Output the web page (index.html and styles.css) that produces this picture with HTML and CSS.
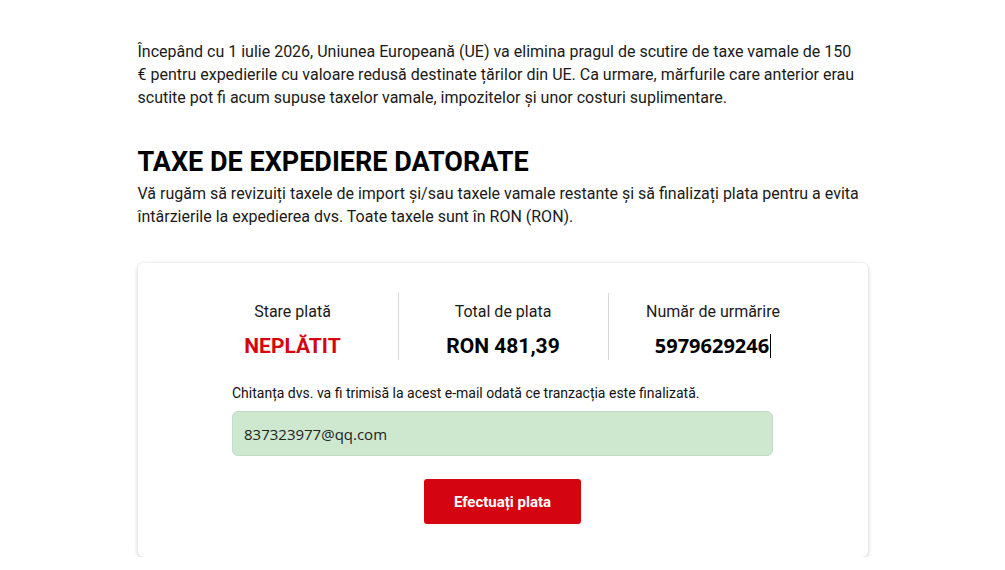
FILE: index.html
```html
<!DOCTYPE html>
<html lang="ro">
<head>
<meta charset="utf-8">
<title>Taxe de expediere</title>
<link rel="stylesheet" href="styles.css">
</head>
<body>
<main class="page">
  <p class="intro">Începând cu 1 iulie 2026, Uniunea Europeană (UE) va elimina pragul de scutire de taxe vamale de 150 € pentru expedierile cu valoare redusă destinate țărilor din UE. Ca urmare, mărfurile care anterior erau scutite pot fi acum supuse taxelor vamale, impozitelor și unor costuri suplimentare.</p>
  <h1 class="title">TAXE DE EXPEDIERE DATORATE</h1>
  <p class="lead">Vă rugăm să revizuiți taxele de import și/sau taxele vamale restante și să finalizați plata pentru a evita întârzierile la expedierea dvs. Toate taxele sunt în RON (RON).</p>
  <section class="card">
    <div class="stats">
      <div class="stat">
        <div class="stat-label">Stare plată</div>
        <div class="stat-value red">NEPLĂTIT</div>
      </div>
      <div class="stat">
        <div class="stat-label">Total de plata</div>
        <div class="stat-value">RON 481,39</div>
      </div>
      <div class="stat">
        <div class="stat-label">Număr de urmărire</div>
        <div class="stat-value track"><span>5979629246</span><span class="caret"></span></div>
      </div>
    </div>
    <div class="form">
      <label class="form-label">Chitanța dvs. va fi trimisă la acest e-mail odată ce tranzacția este finalizată.</label>
      <div class="email">837323977@qq.com</div>
      <div class="actions"><button class="pay">Efectuați plata</button></div>
    </div>
  </section>
</main>
</body>
</html>
```
FILE: styles.css
```css
* { box-sizing: border-box; }
body {
  margin: 0;
  background: #fff;
  color: #1a1a1a;
  font-family: Roboto, "Liberation Sans", sans-serif;
}
.page {
  width: 730px;
  margin: 0 auto;
  padding-top: 40px;
}
.intro {
  margin: 0;
  font-size: 16px;
  line-height: 23px;
  width: 722px;
}
.title {
  margin: 36px 0 0;
  font-size: 27px;
  line-height: 34px;
  font-weight: 700;
  color: #000;
}
.lead {
  margin: 3px 0 0;
  font-size: 16px;
  line-height: 23px;
}
.card {
  margin-top: 35px;
  border-radius: 6px;
  box-shadow: 0 1px 4px rgba(0,0,0,0.22);
  padding: 30px 0 33px;
}
.stats {
  width: 630px;
  margin: 0 auto;
  display: grid;
  grid-template-columns: repeat(3, 1fr);
}
.stat {
  text-align: center;
  padding: 8px 0 0;
  height: 67px;
}
.stat + .stat { border-left: 1px solid #d8d8d8; }
.stat-label { font-size: 16px; line-height: 22px; }
.stat-value {
  margin-top: 11px;
  font-size: 21px;
  line-height: 24px;
  font-weight: 700;
  color: #000;
}
.stat-value.red { color: #d40511; }
.track { font-family: "Open Sans", "Noto Sans", sans-serif; font-size: 20px; display: flex; justify-content: center; align-items: center; }
.caret { display: inline-block; width: 1px; height: 24px; background: #000; margin-left: 1px; }
.form {
  width: 541px;
  margin: 23px auto 0;
}
.form-label { display: block; font-size: 14px; line-height: 20px; color: #111; }
.email {
  margin-top: 8px;
  height: 45px;
  background: #cde8cf;
  border: 1px solid #c4dcc6;
  border-radius: 6px;
  padding: 0 11px;
  display: flex;
  align-items: center;
  font-family: "Open Sans", "Noto Sans", sans-serif;
  font-size: 15px;
  color: #222;
}
.actions { display: flex; justify-content: center; margin-top: 23px; }
.pay {
  width: 157px;
  height: 45px;
  background: #d40511;
  color: #fff;
  border: none;
  border-radius: 3px;
  font-family: inherit;
  font-size: 15px;
  font-weight: 700;
}
```
